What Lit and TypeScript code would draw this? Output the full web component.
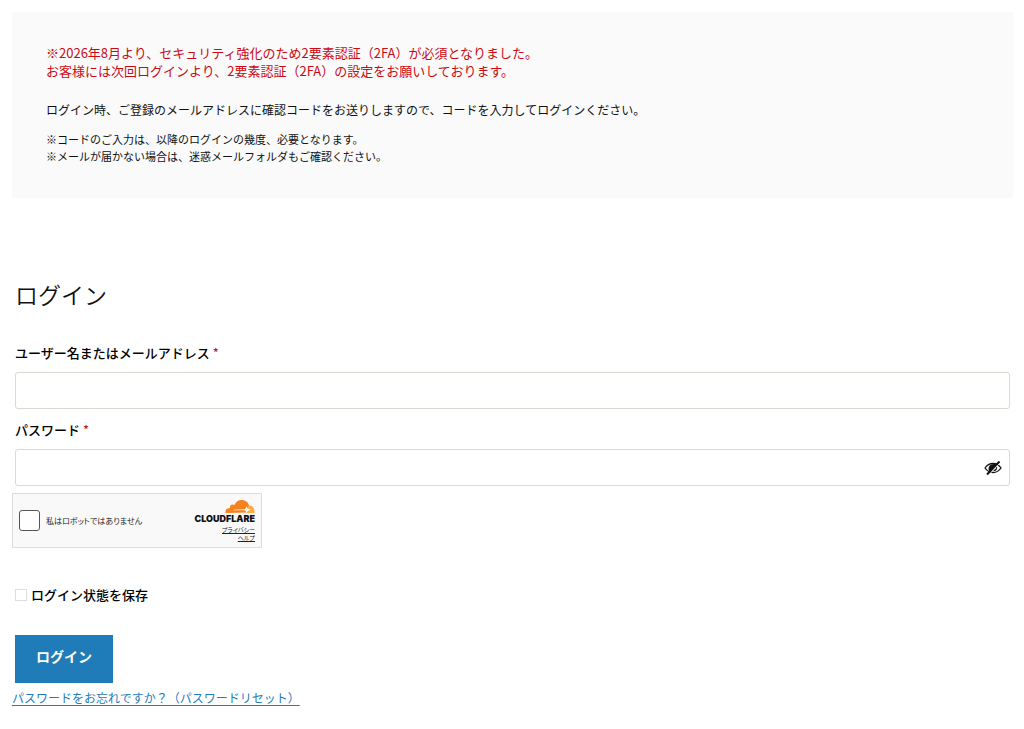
import { LitElement, html, css } from "lit";
import { customElement } from "lit/decorators.js";

@customElement("human-check")
class HumanCheck extends LitElement {
  static styles = css`
    :host {
      display: block;
    }
    .box {
      box-sizing: border-box;
      display: flex;
      align-items: center;
      justify-content: space-between;
      width: 250px;
      height: 55px;
      padding: 0 6px;
      border: 1px solid #dcdcdc;
      border-radius: 1px;
      background: #f9f9f9;
      color: #232323;
    }
    .check {
      display: flex;
      align-items: center;
      gap: 6px;
      font-size: 8px;
      line-height: 12px;
      font-feature-settings: "palt";
    }
    .tick {
      appearance: none;
      box-sizing: border-box;
      width: 21px;
      height: 21px;
      margin: 0;
      border: 1px solid #555;
      border-radius: 3px;
      background: #fff;
    }
    .tick:checked {
      background: #1f7cb8;
    }
    .brand {
      display: flex;
      flex-direction: column;
      align-items: flex-end;
    }
    .cloud {
      display: block;
      width: 30px;
      height: 13px;
    }
    .name {
      font: 900 9px/11px Inter, "Liberation Sans", sans-serif;
      color: #111;
    }
    .links {
      display: flex;
      flex-direction: column;
      align-items: flex-end;
      padding-top: 2px;
    }
    .link {
      color: #232323;
      font-size: 6px;
      line-height: 8px;
      font-feature-settings: "palt";
      text-decoration: underline;
    }
  `;

  render() {
    return html`
      <div class="box">
        <label class="check">
          <input class="tick" type="checkbox" />
          <span>私はロボットではありません</span>
        </label>
        <div class="brand">
          <svg class="cloud" viewBox="0 0 60 28" preserveAspectRatio="none" aria-hidden="true">
            <path fill="#f6821f" d="M1 28C0 21 4 17 10 17C9 11 14 8 19 11C21 4 27 0 33 0C41 0 47 5 48 12L44 27Z" />
            <path fill="#fbad41" d="M43 28L48 12C55 11 60 18 59 28Z" />
            <path fill="#fff" d="M17 21L40 20L43 14L46 19L52 21L46 23L43 28L40 22L17 22Z" />
          </svg>
          <span class="name">CLOUDFLARE</span>
          <nav class="links">
            <a class="link" href="#privacy">プライバシー</a>
            <a class="link" href="#help">ヘルプ</a>
          </nav>
        </div>
      </div>
    `;
  }
}

@customElement("app-root")
class AppRoot extends LitElement {
  static styles = css`
    :host {
      display: block;
      padding: 12px 11px 20px 12px;
      background: #fff;
      color: #111;
      font-family: "Noto Sans CJK JP", sans-serif;
    }
    p,
    h1 {
      margin: 0;
    }
    .notice {
      display: flex;
      flex-direction: column;
      padding: 32px 34px 33px;
      background: #fafafa;
    }
    .alert {
      color: #cc0a14;
      font-size: 13px;
      line-height: 18px;
      padding-bottom: 21px;
    }
    .info {
      font-size: 12px;
      line-height: 18px;
      padding-bottom: 12px;
    }
    .notes {
      font-size: 11px;
      line-height: 17px;
    }
    .form {
      display: flex;
      flex-direction: column;
      padding: 78px 3px 0;
    }
    .title {
      font-size: 23px;
      line-height: 36px;
      font-weight: 350;
      padding-bottom: 31px;
    }
    .label {
      font-size: 13px;
      line-height: 20px;
      font-weight: 500;
      color: #000;
      padding-bottom: 9px;
    }
    .star {
      color: #b01217;
      font-weight: 400;
    }
    .field {
      display: flex;
      align-items: center;
      box-sizing: border-box;
      height: 37px;
      margin-bottom: 11px;
      border: 1px solid #ddd9d2;
      border-radius: 3px;
      background: #fff;
    }
    .last {
      margin-bottom: 7px;
    }
    .input {
      flex: 1;
      min-width: 0;
      height: 100%;
      box-sizing: border-box;
      border: 0;
      padding: 0 12px;
      background: transparent;
      font: inherit;
      font-size: 13px;
      outline: none;
    }
    .eye {
      display: flex;
      padding: 0 7px;
      border: 0;
      background: none;
    }
    .eye svg {
      width: 18px;
      height: 16px;
    }
    .check {
      margin-left: -3px;
    }
    .remember {
      display: flex;
      align-items: center;
      gap: 4px;
      padding: 37px 0 30px;
      font-size: 13px;
      line-height: 20px;
      font-weight: 500;
      color: #000;
    }
    .tick {
      appearance: none;
      box-sizing: border-box;
      width: 12px;
      height: 12px;
      margin: 0;
      border: 1px solid #ddd;
      background: #fff;
    }
    .tick:checked {
      background: #1f7cb8;
    }
    .submit {
      align-self: flex-start;
      padding: 11px 21px 17px;
      border: 0;
      background: #1f7cb8;
      color: #fff;
      font-family: inherit;
      font-size: 14px;
      line-height: 20px;
      font-weight: 700;
    }
    .forgot {
      display: inline-block;
      padding-top: 6px;
      color: #1f7cb8;
      font-size: 12px;
      line-height: 18px;
      text-underline-offset: 2px;
    }
  `;

  render() {
    return html`
      <section class="notice">
        <p class="alert">
          ※2026年8月より、セキュリティ強化のため2要素認証（2FA）が必須となりました。<br />お客様には次回ログインより、2要素認証（2FA）の設定をお願いしております。
        </p>
        <p class="info">ログイン時、ご登録のメールアドレスに確認コードをお送りしますので、コードを入力してログインください。</p>
        <p class="notes">
          ※コードのご入力は、以降のログインの幾度、必要となります。<br />※メールが届かない場合は、迷惑メールフォルダもご確認ください。
        </p>
      </section>
      <form class="form">
        <h1 class="title">ログイン</h1>
        <label class="label" for="user">ユーザー名またはメールアドレス <span class="star">*</span></label>
        <div class="field"><input class="input" id="user" type="text" autocomplete="username" /></div>
        <label class="label" for="pass">パスワード <span class="star">*</span></label>
        <div class="field last">
          <input class="input" id="pass" type="password" autocomplete="current-password" />
          <button class="eye" type="button" aria-label="パスワードを表示">
            <svg viewBox="0 0 18 16" fill="none" stroke="#111" aria-hidden="true">
              <path stroke-width="1.3" d="M1 8C3 5 6 3.500 9 3.500S15 5 17 8C15 11 12 12.500 9 12.500S3 11 1 8Z" />
              <path fill="#111" stroke="none" d="M5 11C3.500 7 6 3.500 11 4L12 5L6 12Z" />
              <path stroke-width="1.200" d="M9.500 10.500C11.500 10.500 13 9 12.500 7" />
              <path stroke="#fff" stroke-width="1" d="M4 15.500L16.500 2.500" />
              <path stroke-width="2" d="M3 14.500L15.500 1.500" />
            </svg>
          </button>
        </div>
        <human-check class="check"></human-check>
        <label class="remember"><input class="tick" type="checkbox" /><span>ログイン状態を保存</span></label>
        <button class="submit" type="button">ログイン</button>
      </form>
      <a class="forgot" href="#reset">パスワードをお忘れですか？（パスワードリセット）</a>
    `;
  }
}
